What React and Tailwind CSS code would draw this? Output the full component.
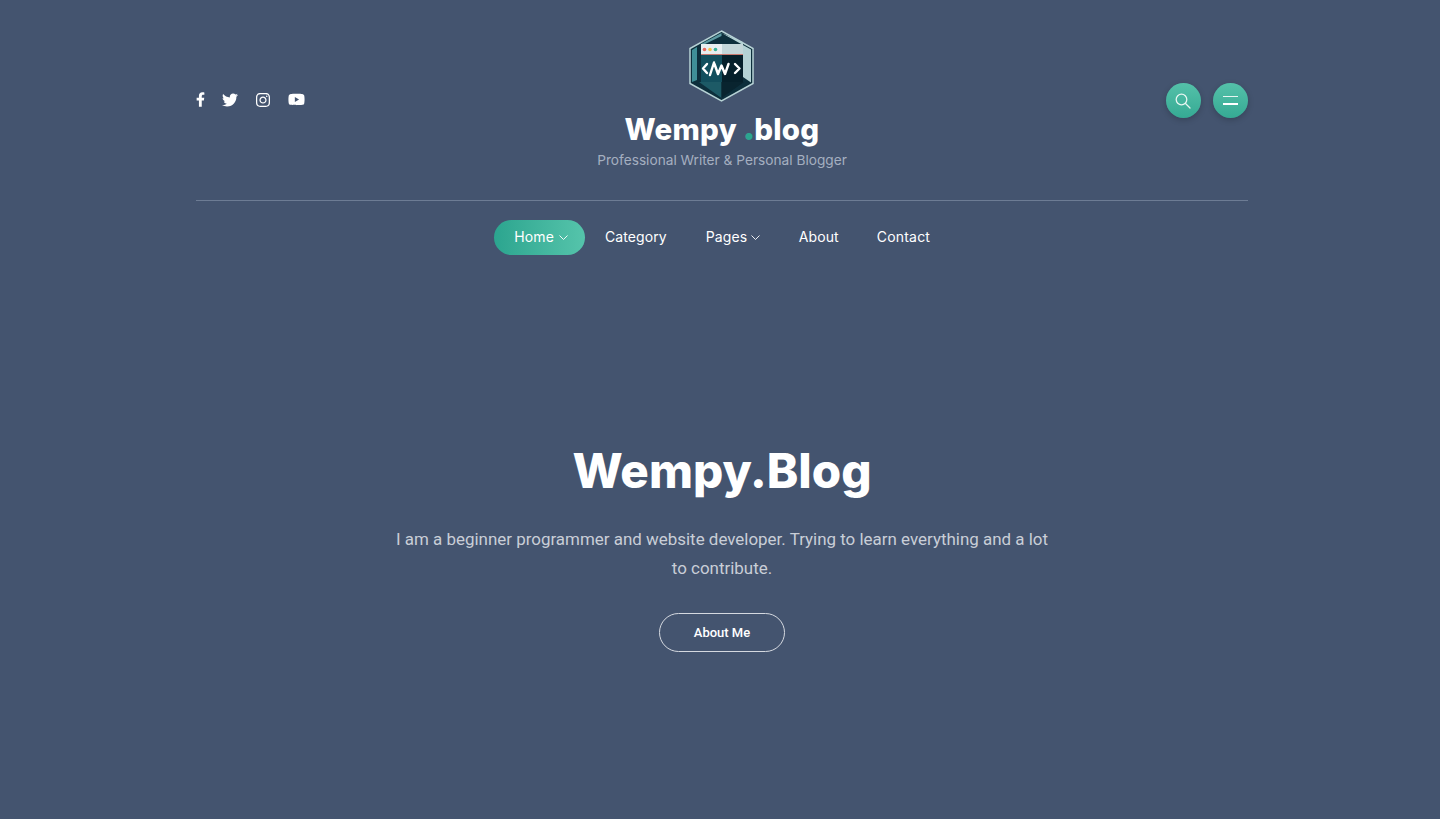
import React from "react";
import { FaFacebookF, FaTwitter, FaInstagram, FaYoutube } from "react-icons/fa";

const Logo = () => (
  <svg width="65" height="72" viewBox="0 0 65 72">
    <polygon points="32.5,1 64,18.5 64,53.5 32.5,71 1,53.5 1,18.5" fill="#0d2f3c" stroke="#b7d2d5" strokeWidth="1.5" />
    <polygon points="32.5,3 62,19.5 62,52.5 54,47 54,12" fill="#b4d2d5" />
    <polygon points="32.5,6 12,16 12,14 32.5,3" fill="#5d9aa2" />
    <polygon points="3,20 8,17 8,50 3,52" fill="#3f8f97" />
    <polygon points="10,52 32.5,52 32.5,68" fill="#1d5a66" />
    <polygon points="32.5,52 55,52 32.5,68" fill="#09242f" />
    <rect x="12" y="14" width="21" height="10" fill="#e7eef0" />
    <rect x="33" y="14" width="21" height="10" fill="#c3d6d9" />
    <rect x="12" y="24" width="42" height="1" fill="#c9796f" />
    <rect x="12" y="25" width="21" height="27" fill="#134f5e" />
    <rect x="33" y="25" width="21" height="27" fill="#06202b" />
    <circle cx="15.5" cy="19.5" r="1.8" fill="#e8685f" />
    <circle cx="21" cy="19.5" r="1.8" fill="#f2c14e" />
    <circle cx="26.5" cy="19.5" r="1.8" fill="#35b39b" />
    <path
      d="M18 34 L14 38.5 L18 43 M25 32.5 L21 45 M25.5 34 L29 44 L32.5 35.5 L36 44 L39.5 34 M46 34 L50.5 38.5 L46 43"
      fill="none"
      stroke="#fff"
      strokeWidth="2.4"
      strokeLinecap="round"
      strokeLinejoin="round"
    />
  </svg>
);

const Chevron = () => (
  <svg width="9" height="5" viewBox="0 0 9 5" fill="none" stroke="currentColor" strokeWidth="0.9" className="mt-[2px]">
    <path d="M0.5 0.5 L4.5 4.5 L8.5 0.5" />
  </svg>
);

const RoundButton = ({ children }) => (
  <button className="flex h-[35px] w-[35px] items-center justify-center rounded-full bg-gradient-to-b from-[#54c1a9] to-[#35aa94] shadow-[0_2px_6px_rgba(0,0,0,0.2)]">
    {children}
  </button>
);

const App = () => {
  return (
    <div className="min-h-[819px] bg-[#44546f] font-['Liberation_Sans',sans-serif] text-white">
      <div className="ml-[196px] w-[1052px]">
        {/* Header */}
        <header className="flex items-center justify-between border-b border-[#6d7c94] pt-[30px] pb-[29px]">
          <div className="mb-[2px] flex w-[200px] items-center gap-[17px]">
            <FaFacebookF className="h-[15px] w-[9px]" />
            <FaTwitter className="h-[16px] w-[16px]" />
            <FaInstagram className="h-[16px] w-[16px]" />
            <FaYoutube className="h-[17px] w-[17px]" />
          </div>

          <div className="flex flex-col items-center">
            <Logo />
            <div className="mt-[5px] h-[40px] font-['Inter',sans-serif] text-[29.5px] leading-[40px] font-extrabold tracking-[0.2px]">
              Wempy <span className="-mx-[1.5px] text-[38px] leading-none text-[#2ba58f]">.</span>blog
            </div>
            <div className="mt-[3px] font-['Inter',sans-serif] text-[13.7px] leading-[21px] text-[#a4afc0]">
              Professional Writer &amp; Personal Blogger
            </div>
          </div>

          <div className="flex w-[200px] justify-end gap-[12px]">
            <RoundButton>
              <svg width="18" height="18" viewBox="0 0 18 18" fill="none" stroke="#e6f5f1" strokeWidth="1.3" strokeLinecap="round">
                <circle cx="7.5" cy="7.5" r="5.3" />
                <path d="M11.5 11.5 L16 16" />
              </svg>
            </RoundButton>
            <RoundButton>
              <div className="flex flex-col gap-[6px]">
                <span className="block h-[1px] w-[15px] bg-[#e6f5f1]" />
                <span className="block h-[1.5px] w-[15px] bg-white" />
              </div>
            </RoundButton>
          </div>
        </header>

        {/* Nav */}
        <nav className="mt-[19px] flex items-center justify-center font-['Inter',sans-serif] text-[14px] font-normal tracking-[0.1px]">
          <a className="flex h-[35px] items-center gap-[5px] rounded-full bg-gradient-to-r from-[#2ba58f] to-[#55c4ab] pr-[17.5px] pb-[2px] pl-[20px]">
            Home <Chevron />
          </a>
          <a className="px-[19.5px] pb-[2px]">Category</a>
          <a className="flex items-center gap-[4px] pr-[19px] pb-[2px] pl-[19.5px]">
            Pages <Chevron />
          </a>
          <a className="pr-[18.5px] pb-[2px] pl-[19.5px]">About</a>
          <a className="px-[19.5px] pb-[2px] tracking-[0.2px]">Contact</a>
        </nav>

        {/* Hero */}
        <section className="mt-[184px] flex flex-col items-center text-center">
          <h1 className="font-['Inter',sans-serif] text-[47.5px] leading-[64px] font-extrabold">Wempy.Blog</h1>
          <p className="mt-[22px] w-[660px] font-['Roboto',sans-serif] text-[16.95px] leading-[29px] text-[#c9ced7]">
            I am a beginner programmer and website developer. Trying to learn everything and a lot to contribute.
          </p>
          <a className="mt-[30px] flex h-[39px] w-[126px] items-center justify-center rounded-full border border-[#d5d9e0] font-['Roboto',sans-serif] text-[13px] font-medium">
            About Me
          </a>
        </section>
      </div>
    </div>
  );
};

export default App;
